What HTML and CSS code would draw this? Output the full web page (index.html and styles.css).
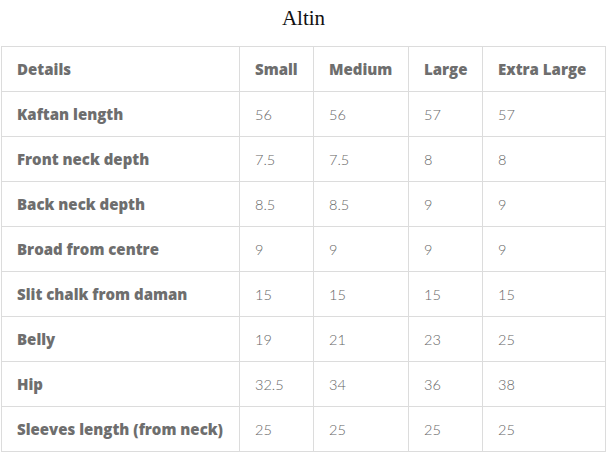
FILE: index.html
```html
<!DOCTYPE html>
<html>
<head>
<meta charset="utf-8">
<link rel="stylesheet" href="styles.css">
</head>
<body>
<div class="wrap">
  <h2 class="title">Altin</h2>
  <table class="size-table">
    <colgroup>
      <col class="c1"><col class="c2"><col class="c3"><col class="c4"><col class="c5">
    </colgroup>
    <thead>
      <tr><th>Details</th><th>Small</th><th>Medium</th><th>Large</th><th>Extra Large</th></tr>
    </thead>
    <tbody>
      <tr><th>Kaftan length</th><td>56</td><td>56</td><td>57</td><td>57</td></tr>
      <tr><th>Front neck depth</th><td>7.5</td><td>7.5</td><td>8</td><td>8</td></tr>
      <tr><th>Back neck depth</th><td>8.5</td><td>8.5</td><td>9</td><td>9</td></tr>
      <tr><th>Broad from centre</th><td>9</td><td>9</td><td>9</td><td>9</td></tr>
      <tr><th>Slit chalk from daman</th><td>15</td><td>15</td><td>15</td><td>15</td></tr>
      <tr><th>Belly</th><td>19</td><td>21</td><td>23</td><td>25</td></tr>
      <tr><th>Hip</th><td>32.5</td><td>34</td><td>36</td><td>38</td></tr>
      <tr><th>Sleeves length (from neck)</th><td>25</td><td>25</td><td>25</td><td>25</td></tr>
    </tbody>
  </table>
</div>
</body>
</html>
```
FILE: styles.css
```css
html, body {
  margin: 0;
  padding: 0;
  background: #fff;
}
.wrap {
  width: 605px;
  padding-left: 1px;
}
.title {
  margin: 0;
  height: 46px;
  padding-top: 6px;
  box-sizing: border-box;
  text-align: center;
  font-family: "Liberation Serif", serif;
  font-weight: normal;
  font-size: 21px;
  line-height: 24px;
  color: #111;
}
.size-table {
  border-collapse: collapse;
  table-layout: fixed;
  width: 604px;
}
.c1 { width: 238px; }
.c2 { width: 74px; }
.c3 { width: 95px; }
.c4 { width: 74px; }
.c5 { width: 123px; }
.size-table th,
.size-table td {
  border: 1px solid #dcdcdc;
  height: 44px;
  padding: 0 0 0 15px;
  text-align: left;
  vertical-align: middle;
  white-space: nowrap;
}
.size-table th {
  font-family: "Open Sans", Lato, sans-serif;
  font-size: 15px;
  font-weight: 800;
  color: #6e6e6e;
}
.size-table td {
  font-family: Lato, "Open Sans", sans-serif;
  font-size: 14.5px;
  font-weight: 300;
  color: #666;
}
```
